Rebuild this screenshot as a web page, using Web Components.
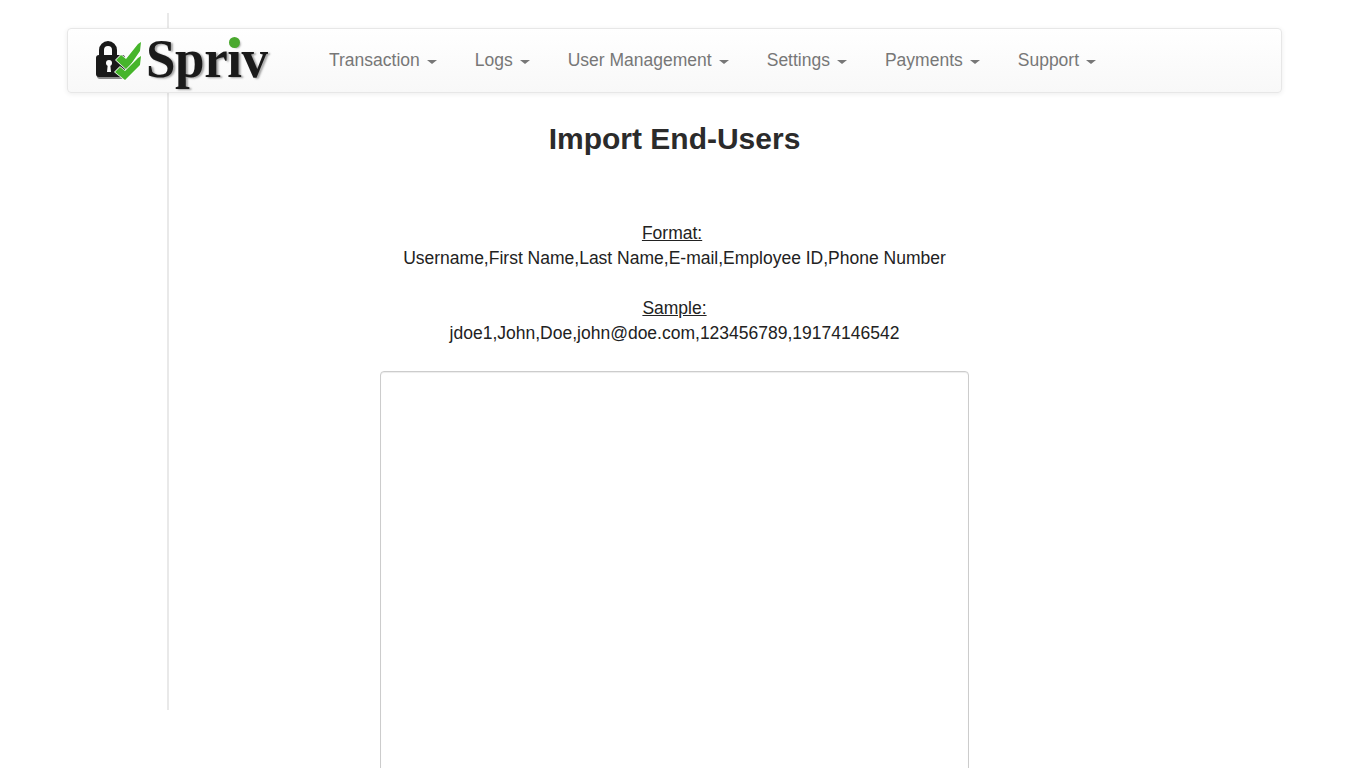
<!DOCTYPE html>
<html lang="en">
<head>
<meta charset="utf-8">
<title>Import End-Users</title>
<style>
  html, body { margin: 0; padding: 0; background: #fff; overflow: hidden; }
  body { font-family: "Liberation Sans", Arial, sans-serif; color: #222; }
</style>
</head>
<body>
<spriv-page>
  <spriv-navbar>
    <spriv-logo slot="brand"></spriv-logo>
    <nav-item>Transaction</nav-item>
    <nav-item>Logs</nav-item>
    <nav-item>User Management</nav-item>
    <nav-item>Settings</nav-item>
    <nav-item>Payments</nav-item>
    <nav-item>Support</nav-item>
  </spriv-navbar>
  <import-panel heading="Import End-Users">
    <span slot="format">Username,First Name,Last Name,E-mail,Employee ID,Phone Number</span>
    <span slot="sample">jdoe1,John,Doe,john@doe.com,123456789,19174146542</span>
  </import-panel>
</spriv-page>

<script>
// page frame, the column is 1349 wide because the original had a scrollbar
class SprivPage extends HTMLElement {
  constructor() {
    super();
    this.attachShadow({ mode: 'open' });
    this.shadowRoot.innerHTML = `
      <style>
        :host { display: block; position: relative; width: 1349px; height: 768px; overflow: hidden; padding-top: 28px; box-sizing: border-box; }
        .rule { position: absolute; left: 167px; top: 13px; width: 2px; height: 697px; background: #e9e9e9; }
        .content { position: relative; }
      </style>
      <div class="rule"></div>
      <div class="content"><slot></slot></div>
    `;
  }
}

class SprivNavbar extends HTMLElement {
  constructor() {
    super();
    this.attachShadow({ mode: 'open' });
    this.shadowRoot.innerHTML = `
      <style>
        :host {
          display: flex;
          align-items: center;
          box-sizing: border-box;
          width: 1215px;
          height: 65px;
          margin: 0 auto;
          padding-left: 27px;
          background: linear-gradient(to bottom, #fff 0%, #f8f8f8 100%);
          border: 1px solid #e7e7e7;
          border-radius: 4px;
          box-shadow: inset 0 1px 0 rgba(255,255,255,.15), 0 1px 5px rgba(0,0,0,.075);
        }
        .items { display: flex; margin-left: 59px; }
      </style>
      <slot name="brand"></slot>
      <div class="items"><slot></slot></div>
    `;
  }
}

class NavItem extends HTMLElement {
  constructor() {
    super();
    this.attachShadow({ mode: 'open' });
    this.shadowRoot.innerHTML = `
      <style>
        :host { display: flex; align-items: center; margin-right: 38px; font-size: 17.5px; line-height: 25px; color: #777; cursor: pointer; }
        .caret { width: 0; height: 0; margin-left: 7px; margin-top: 2px; border-top: 4px solid #777; border-left: 5px solid transparent; border-right: 5px solid transparent; }
      </style>
      <slot></slot><span class="caret"></span>
    `;
  }
}

// logo: lock and ticks are drawn, the word stays text
class SprivLogo extends HTMLElement {
  constructor() {
    super();
    this.attachShadow({ mode: 'open' });
    this.shadowRoot.innerHTML = `
      <style>
        :host { display: flex; align-items: center; position: relative; width: 175px; height: 63px; }
        svg { position: absolute; left: 0; top: 10px; filter: blur(.35px); }
        .word {
          position: absolute; left: 51px; top: 0;
          font: bold 53px/60px "Liberation Serif", "Times New Roman", serif;
          letter-spacing: -0.4px;
          color: #1a1a1a;
          text-shadow: 2px 1px 2px rgba(0,0,0,.35);
          transform: scaleY(1.05);
          transform-origin: 0 46px;
          filter: blur(.35px);
        }
        .dot { position: absolute; left: 134px; top: 8px; width: 11px; height: 11px; border-radius: 50%; background: #4aa82e; }
      </style>
      <svg width="48" height="42" viewBox="0 0 48 42">
        <path d="M6.500 18V11a6.500 6.500 0 0 1 13 0V18" fill="none" stroke="#1a1a1a" stroke-width="5"/>
        <rect x="2" y="18" width="29" height="22" rx="3" fill="#888"/>
        <rect x="1" y="16" width="29" height="22" rx="3" fill="#1a1a1a"/>
        <circle cx="14" cy="24" r="3" fill="#fff"/>
        <path d="M12.800 25h2.400l.8 8h-4z" fill="#fff"/>
        <g stroke="#fff" stroke-width="1.500" stroke-linejoin="round" paint-order="stroke">
          <polygon points="21,21 26,16 31,20 43,5 46,3 45,12 32,31" fill="#46b52b"/>
          <polygon points="20,33 25,28 30,32 43,19 46,17 45,26 30,41" fill="#46b52b"/>
        </g>
      </svg>
      <span class="word">Spriv</span>
      <span class="dot"></span>
    `;
  }
}

class ImportPanel extends HTMLElement {
  constructor() {
    super();
    this.attachShadow({ mode: 'open' });
    this.shadowRoot.innerHTML = `
      <style>
        :host { display: flex; flex-direction: column; align-items: center; text-align: center; font-size: 17.5px; line-height: 25px; color: #222; }
        h1 { margin: 29px 0 0; font-size: 30px; line-height: 33px; font-weight: bold; color: #2b2b2b; }
        .format { margin-top: 66px; }
        .label { display: block; }
        .label span { text-decoration: underline; }
        .sample { margin-top: 25px; }
        textarea {
          display: block;
          box-sizing: border-box;
          width: 589px;
          height: 500px;
          margin-top: 25px;
          padding: 6px 12px;
          background: #fff;
          border: 1px solid #ccc;
          border-radius: 4px;
          box-shadow: inset 0 1px 1px rgba(0,0,0,.075);
          resize: none;
          outline: none;
        }
      </style>
      <h1 id="title"></h1>
      <div class="format"><span class="label"><span>Format:</span>&nbsp;</span><slot name="format"></slot></div>
      <div class="sample"><span class="label"><span>Sample:</span></span><slot name="sample"></slot></div>
      <textarea></textarea>
    `;
  }

  connectedCallback() {
    this.shadowRoot.getElementById('title').textContent = this.getAttribute('heading');
  }
}

customElements.define('spriv-page', SprivPage);
customElements.define('spriv-navbar', SprivNavbar);
customElements.define('nav-item', NavItem);
customElements.define('spriv-logo', SprivLogo);
customElements.define('import-panel', ImportPanel);
</script>
</body>
</html>
